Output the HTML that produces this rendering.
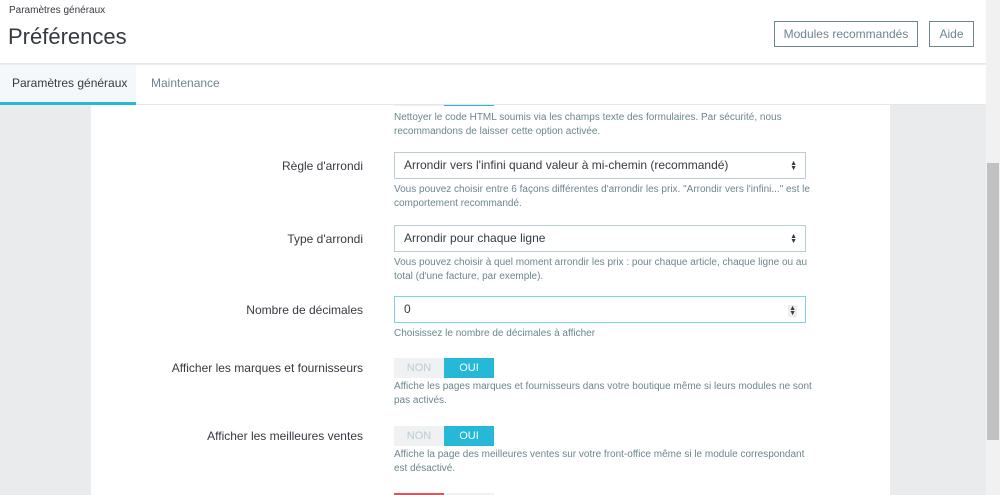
<!DOCTYPE html>
<html><head><meta charset="utf-8"><style>
*{box-sizing:border-box;margin:0;padding:0}
html,body{width:1000px;height:495px;overflow:hidden}
body{background:#eaebec;font-family:"Liberation Sans",sans-serif;color:#363a41;position:relative}
.hdr{position:absolute;left:0;top:0;width:986px;height:64px;background:#fff;border-bottom:1px solid #e4e6e8}
.bc{position:absolute;left:9px;top:5px;font-size:10px;color:#363a41}
.ttl{position:absolute;left:8px;top:24px;font-size:22px;color:#363a41}
.btn{position:absolute;top:21px;height:26px;border:1px solid #6c868e;color:#6c868e;font-size:12px;line-height:24px;text-align:center;background:#fff}
.tabs{position:absolute;left:0;top:65px;width:986px;height:40px;background:#fff;border-bottom:1px solid #e4e6e8}
.tab{position:absolute;top:0;height:40px;line-height:36px;font-size:12px}
.card{position:absolute;left:91px;top:105px;width:799px;height:390px;background:#fff;overflow:hidden}
.lbl{position:absolute;right:527px;font-size:12px;color:#363a41;text-align:right;white-space:nowrap}
.help{position:absolute;left:303px;width:420px;font-size:10px;line-height:14px;color:#6c868e}
.inp{position:absolute;left:303px;width:412px;height:27px;border:1px solid #bbcdd2;font-size:12px;line-height:25px;padding-left:9px;color:#363a41}
.arr{position:absolute;right:8px;top:8px;font-size:7px;line-height:5px;color:#363a41}
.tg{position:absolute;left:303px;width:100px;height:20px;font-size:11px;line-height:20px;text-align:center}
.tg span{float:left;width:50px;height:20px}
.n{background:#eff1f2;color:#bbcdd2}.o{background:#25b9d7;color:#fff}
.sb{position:absolute;left:986px;top:0;width:14px;height:495px;background:#f1f1f1}
.th{position:absolute;left:987px;top:163px;width:12px;height:277px;background:#c1c1c1}
</style></head><body>
<div class="card">
<div class="tg" style="top:-19px"><span class="n"></span><span class="o"></span></div>
<div class="help" style="top:6px">Nettoyer le code HTML soumis via les champs texte des formulaires. Par sécurité, nous recommandons de laisser cette option activée.</div>
<div class="lbl" style="top:54px">Règle d'arrondi</div>
<div class="inp" style="top:47px">Arrondir vers l'infini quand valeur à mi-chemin (recommandé)<div class="arr">▲<br>▼</div></div>
<div class="help" style="top:78px">Vous pouvez choisir entre 6 façons différentes d'arrondir les prix. "Arrondir vers l'infini..." est le comportement recommandé.</div>
<div class="lbl" style="top:127px">Type d'arrondi</div>
<div class="inp" style="top:120px">Arrondir pour chaque ligne<div class="arr">▲<br>▼</div></div>
<div class="help" style="top:151px">Vous pouvez choisir à quel moment arrondir les prix : pour chaque article, chaque ligne ou au total (d'une facture, par exemple).</div>
<div class="lbl" style="top:198px">Nombre de décimales</div>
<div class="inp" style="top:191px;border-color:#7cd5e7">0<div class="arr" style="background:#eee;padding:1px">▲<br>▼</div></div>
<div class="help" style="top:222px">Choisissez le nombre de décimales à afficher</div>
<div class="lbl" style="top:256px">Afficher les marques et fournisseurs</div>
<div class="tg" style="top:253px"><span class="n">NON</span><span class="o">OUI</span></div>
<div class="help" style="top:275px">Affiche les pages marques et fournisseurs dans votre boutique même si leurs modules ne sont pas activés.</div>
<div class="lbl" style="top:324px">Afficher les meilleures ventes</div>
<div class="tg" style="top:321px"><span class="n">NON</span><span class="o">OUI</span></div>
<div class="help" style="top:343px">Affiche la page des meilleures ventes sur votre front-office même si le module correspondant est désactivé.</div>
<div class="tg" style="top:388px"><span style="background:#e84e5b"></span><span class="n"></span></div>
</div>
<div class="hdr">
<div class="bc">Paramètres généraux</div>
<div class="ttl">Préférences</div>
<div class="btn" style="left:774px;width:144px">Modules recommandés</div>
<div class="btn" style="left:929px;width:45px">Aide</div>
</div>
<div class="tabs">
<div class="tab" style="left:0;width:136px;background:#f4f8fb;border-bottom:3px solid #25b9d7;padding-left:12px;color:#363a41">Paramètres généraux</div>
<div class="tab" style="left:151px;color:#6c868e">Maintenance</div>
</div>
<div class="sb"></div><div class="th"></div>
</body></html>
